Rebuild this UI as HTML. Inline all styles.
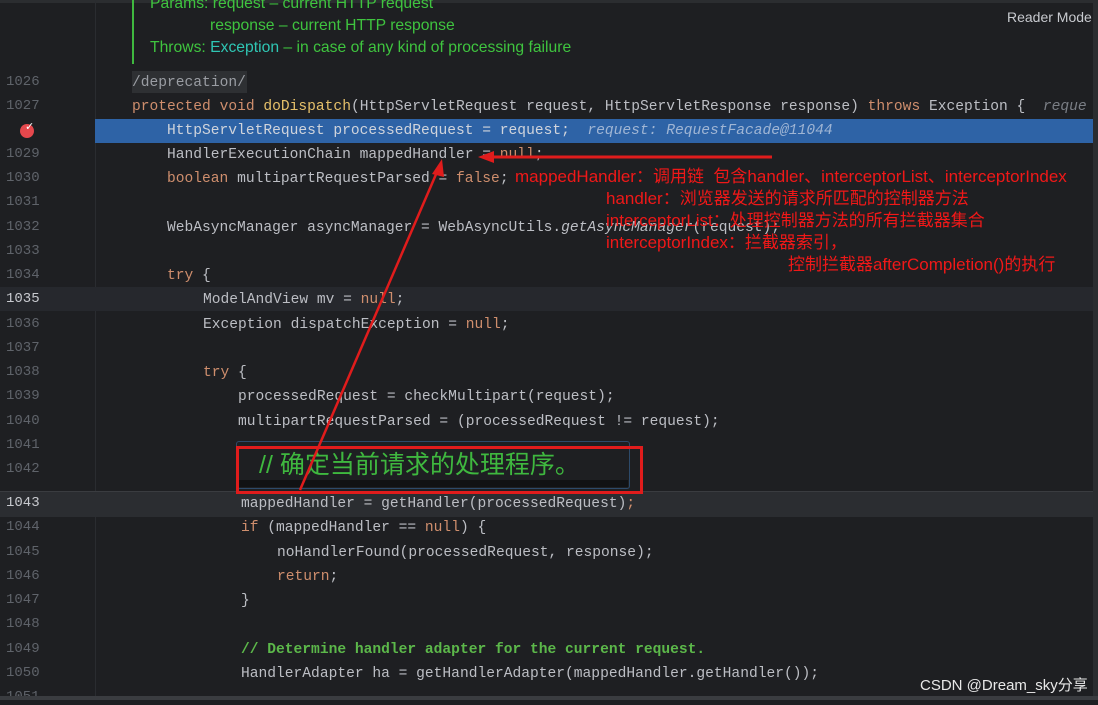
<!DOCTYPE html>
<html><head><meta charset="utf-8"><style>
body{margin:0;width:1098px;height:700px;background:#1e1f22;overflow:hidden;position:relative;font-family:"Liberation Mono",monospace;}
.ln{position:absolute;left:6px;font-size:14px;color:#5f636a;font-family:"Liberation Mono",monospace;}
.c{position:absolute;font-size:14.6px;color:#bcbec4;white-space:pre;font-family:"Liberation Mono",monospace;}
.k{color:#cf8e6d}.f{color:#e6c06a}.cm{color:#5cb84a}.it{font-style:italic;color:#7a7e85}
.doc{position:absolute;font-family:"Liberation Sans",sans-serif;font-size:15.7px;color:#3fc43f;white-space:pre;}
.red{position:absolute;font-family:"Liberation Sans","Noto Sans CJK SC",sans-serif;color:#f01818;font-size:17px;white-space:pre;}
</style></head><body>
<div style="position:absolute;left:0;top:0;width:1098px;height:3px;background:#2b2d30"></div>
<div style="position:absolute;left:132px;top:0;width:2px;height:64px;background:#3fb83f"></div>
<div class="doc" style="left:150px;top:-5px">Params: request – current HTTP request</div>
<div class="doc" style="left:210px;top:17px">response – current HTTP response</div>
<div class="doc" style="left:150px;top:39px">Throws: <span style="color:#2fc6b4">Exception</span> – in case of any kind of processing failure</div>
<div style="position:absolute;left:1007px;top:9px;font-family:'Liberation Sans',sans-serif;font-size:14px;color:#c8cacf">Reader Mode</div>
<div style="position:absolute;left:95px;top:0;width:1px;height:700px;background:#2a2c30"></div>
<div style="position:absolute;left:95px;top:119px;width:998px;height:24px;background:#2e63a6"></div>
<div style="position:absolute;left:0;top:287px;width:1093px;height:24px;background:#26282d"></div>
<div style="position:absolute;left:0;top:491px;width:1093px;height:25px;background:#2b2d31;border-top:1px solid #3a3c40"></div>
<div style="position:absolute;left:132px;top:71px;width:115px;height:22px;background:#2e3033"></div>
<div style="position:absolute;left:236px;top:441px;width:392px;height:46px;background:#1e1f22;border:1px solid #2d4a6a;border-radius:3px"></div>
<div style="position:absolute;left:238px;top:480px;width:390px;height:7px;background:#111214"></div>
<div style="position:absolute;left:20px;top:124px;width:14px;height:14px;border-radius:50%;background:#e5484d"></div>
<div style="position:absolute;left:25px;top:120px;font-size:11px;color:#fff;font-family:'DejaVu Sans'">✓</div>
<div class="ln" style="top:74px">1026</div>
<div class="ln" style="top:98px">1027</div>
<div class="ln" style="top:146px">1029</div>
<div class="ln" style="top:170px">1030</div>
<div class="ln" style="top:194px">1031</div>
<div class="ln" style="top:219px">1032</div>
<div class="ln" style="top:243px">1033</div>
<div class="ln" style="top:267px">1034</div>
<div class="ln" style="top:291px;color:#c8cacf">1035</div>
<div class="ln" style="top:316px">1036</div>
<div class="ln" style="top:340px">1037</div>
<div class="ln" style="top:364px">1038</div>
<div class="ln" style="top:388px">1039</div>
<div class="ln" style="top:413px">1040</div>
<div class="ln" style="top:437px">1041</div>
<div class="ln" style="top:461px">1042</div>
<div class="ln" style="top:495px;color:#c8cacf">1043</div>
<div class="ln" style="top:519px">1044</div>
<div class="ln" style="top:544px">1045</div>
<div class="ln" style="top:568px">1046</div>
<div class="ln" style="top:592px">1047</div>
<div class="ln" style="top:616px">1048</div>
<div class="ln" style="top:641px">1049</div>
<div class="ln" style="top:665px">1050</div>
<div class="ln" style="top:689px">1051</div>
<div class="c" style="left:132px;top:75px;color:#9a9da3">/deprecation/</div>
<div class="c" style="left:132px;top:99px"><span class="k">protected void </span><span class="f">doDispatch</span>(HttpServletRequest request, HttpServletResponse response) <span class="k">throws</span> Exception {  <span class="it">reque</span></div>
<div class="c" style="left:167px;top:123px;color:#d0d4dc">HttpServletRequest processedRequest = request;  <span style="font-style:italic;color:#9fb5d4">request: RequestFacade@11044</span></div>
<div class="c" style="left:167px;top:147px">HandlerExecutionChain mappedHandler = <span class="k">null</span>;</div>
<div class="c" style="left:167px;top:171px"><span class="k">boolean</span> multipartRequestParsed = <span class="k">false</span>;</div>
<div class="c" style="left:167px;top:220px">WebAsyncManager asyncManager = WebAsyncUtils.<i>getAsyncManager</i>(request);</div>
<div class="c" style="left:167px;top:268px"><span class="k">try</span> {</div>
<div class="c" style="left:203px;top:292px">ModelAndView mv = <span class="k">null</span>;</div>
<div class="c" style="left:203px;top:317px">Exception dispatchException = <span class="k">null</span>;</div>
<div class="c" style="left:203px;top:365px"><span class="k">try</span> {</div>
<div class="c" style="left:238px;top:389px">processedRequest = checkMultipart(request);</div>
<div class="c" style="left:238px;top:414px">multipartRequestParsed = (processedRequest != request);</div>
<div style="position:absolute;left:259px;top:450px;font-family:'Liberation Sans','Noto Sans CJK SC',sans-serif;font-size:25px;line-height:30px;color:#3fb83f;white-space:pre">// 确定当前请求的处理程序。</div>
<div class="c" style="left:241px;top:496px">mappedHandler = getHandler(processedRequest)<span class="k">;</span></div>
<div class="c" style="left:241px;top:520px"><span class="k">if</span> (mappedHandler == <span class="k">null</span>) {</div>
<div class="c" style="left:277px;top:545px">noHandlerFound(processedRequest, response);</div>
<div class="c" style="left:277px;top:569px"><span class="k">return</span>;</div>
<div class="c" style="left:241px;top:593px">}</div>
<div class="c cm" style="left:241px;top:642px;font-weight:bold">// Determine handler adapter for the current request.</div>
<div class="c" style="left:241px;top:666px">HandlerAdapter ha = getHandlerAdapter(mappedHandler.getHandler());</div>
<div class="red" style="left:515px;top:162px">mappedHandler：调用链  包含handler、interceptorList、interceptorIndex</div>
<div class="red" style="left:606px;top:184px">handler：浏览器发送的请求所匹配的控制器方法</div>
<div class="red" style="left:606px;top:206px">interceptorList：处理控制器方法的所有拦截器集合</div>
<div class="red" style="left:606px;top:228px">interceptorIndex：拦截器索引，</div>
<div class="red" style="left:788px;top:250px">控制拦截器afterCompletion()的执行</div>
<div style="position:absolute;left:236px;top:446px;width:401px;height:42px;border:3px solid #e01c1c"></div>
<svg style="position:absolute;left:0;top:0" width="1098" height="700">
<line x1="772" y1="157" x2="490" y2="157" stroke="#e01c1c" stroke-width="3"/>
<polygon points="478,157 494,151 494,163" fill="#e01c1c"/>
<line x1="300" y1="490" x2="437" y2="172" stroke="#e01c1c" stroke-width="2.5"/>
<polygon points="442,159 432,174 444,177" fill="#e01c1c"/>
</svg>
<div style="position:absolute;left:920px;top:674px;font-family:'Liberation Sans','Noto Sans CJK SC',sans-serif;font-size:15px;color:#e8e8e8">CSDN @Dream_sky分享</div>
<div style="position:absolute;left:1093px;top:0;width:5px;height:700px;background:#2b2d30"></div>
<div style="position:absolute;left:0;top:696px;width:1098px;height:4px;background:#3a3c40"></div>
</body></html>
